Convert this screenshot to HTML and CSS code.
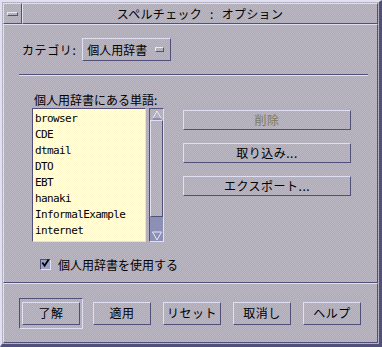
FILE: index.html
```html
<!DOCTYPE html>
<html lang="ja">
<head>
<meta charset="UTF-8" />
<title>スペルチェック : オプション</title>
<link rel="stylesheet" href="styles.css">
</head>
<body>

<div class="window">
  <div class="titlebar">
    <div class="menu-btn"><span class="menu-bar"></span></div>
    <div class="title">スペルチェック : オプション</div>
  </div>

  <div class="content">
    <div class="category">
      <span class="label">カテゴリ:</span>
      <div class="option-menu">
        <span>個人用辞書</span>
        <span class="option-mark"></span>
      </div>
    </div>

    <div class="separator"></div>

    <div class="words-title">個人用辞書にある単語:</div>
    <div class="words-row">
      <div class="list">
        <div class="item">browser</div>
        <div class="item">CDE</div>
        <div class="item">dtmail</div>
        <div class="item">DTO</div>
        <div class="item">EBT</div>
        <div class="item">hanaki</div>
        <div class="item">InformalExample</div>
        <div class="item">internet</div>
      </div>
      <div class="scrollbar">
        <div class="arrow up"><svg width="12" height="10" viewBox="0 0 12 10"><path d="M1.5 9 L6 1 L10.5 9 Z" fill="none" stroke="#e8e8f8" stroke-width="1"/><path d="M1.5 9 L10.5 9" stroke="#50507a"/></svg></div>
        <div class="slider"></div>
        <div class="trough"></div>
        <div class="arrow down"><svg width="12" height="10" viewBox="0 0 12 10"><path d="M1.5 1 L6 9 L10.5 1 Z" fill="none" stroke="#e8e8f8" stroke-width="1"/></svg></div>
      </div>
      <div class="side-buttons">
        <button class="btn disabled">削除</button>
        <button class="btn">取り込み...</button>
        <button class="btn">エクスポート...</button>
      </div>
    </div>

    <label class="check">
      <span class="check-box">
        <svg width="10" height="10" viewBox="0 0 10 10"><path d="M1.5 4.5 L4 8 L8.5 1" fill="none" stroke="#000" stroke-width="2"/></svg>
      </span>
      <span>個人用辞書を使用する</span>
    </label>
  </div>

  <div class="footer">
    <div class="default-frame"><button class="btn small">了解</button></div>
    <button class="btn small">適用</button>
    <button class="btn small">リセット</button>
    <button class="btn small">取消し</button>
    <button class="btn small">ヘルプ</button>
  </div>
</div>

</body>
</html>
```

FILE: styles.css
```css
body {
  margin: 0;
  padding: 0;
  font-family: "Noto Sans CJK JP", "DejaVu Sans", sans-serif;
  font-size: 12px;
  color: #000;
  background: #50507a;
}
.window {
  box-sizing: border-box;
  width: 382px;
  height: 347px;
  background: repeating-conic-gradient(#a0a8e0 0 25%, #bcb8c4 0 50%) 0 0/2px 2px;
  border-top: 2px solid #e0e0f4;
  border-left: 2px solid #e0e0f4;
  border-right: 3px solid #50507a;
  border-bottom: 3px solid #50507a;
  display: flex;
  flex-direction: column;
}
.titlebar {
  display: flex;
  height: 21px;
  margin: 1px 1px 0 1px;
}
.menu-btn {
  box-sizing: border-box;
  width: 19px;
  border-top: 1px solid #e0e0f4;
  border-left: 1px solid #e0e0f4;
  border-right: 1px solid #50507a;
  border-bottom: 1px solid #50507a;
  display: flex;
  align-items: center;
  justify-content: center;
}
.menu-bar {
  width: 9px;
  height: 2px;
  border-top: 1px solid #e8e8f8;
  border-left: 1px solid #e8e8f8;
  border-right: 1px solid #50507a;
  border-bottom: 1px solid #50507a;
}
.title {
  flex: 1;
  box-sizing: border-box;
  border-top: 1px solid #e0e0f4;
  border-left: 1px solid #e0e0f4;
  border-right: 1px solid #50507a;
  border-bottom: 1px solid #50507a;
  text-align: center;
  line-height: 19px;
  font-size: 12px;
  white-space: pre;
  letter-spacing: 0.3px;
  word-spacing: 5px;
}
.content {
  flex: 1;
  box-sizing: border-box;
  border-top: 1px solid #e0e0f4;
  border-left: 1px solid #e0e0f4;
  border-right: 1px solid #50507a;
  border-bottom: 1px solid #50507a;
  margin: 0 1px;
  padding: 13px 12px 0 18px;
}
.category {
  display: flex;
  align-items: center;
  gap: 6px;
}
.label {
  letter-spacing: 0.6px;
}
.option-menu {
  box-sizing: border-box;
  width: 89px;
  height: 23px;
  border-top: 1px solid #e0e0f4;
  border-left: 1px solid #e0e0f4;
  border-right: 1px solid #50507a;
  border-bottom: 1px solid #50507a;
  display: flex;
  align-items: center;
  padding-left: 4px;
  font-size: 12px;
}
.option-mark {
  width: 7px;
  height: 3px;
  margin-left: 8px;
  border-top: 1px solid #e8e8f8;
  border-left: 1px solid #e8e8f8;
  border-right: 1px solid #50507a;
  border-bottom: 1px solid #50507a;
}
.separator {
  height: 0;
  border-top: 1px solid #50507a;
  border-bottom: 1px solid #e0e0f4;
  margin: 13px -3px 0 -3px;
}
.words-title {
  margin: 17px 0 0 12px;
  line-height: 14px;
}
.words-row {
  display: flex;
  margin: 1px 0 0 10px;
}
.list {
  box-sizing: border-box;
  width: 114px;
  height: 134px;
  background: repeating-conic-gradient(#fffff4 0 25%, #fff8cc 0 50%) 0 0/2px 2px;
  border-top: 1px solid #50507a;
  border-left: 1px solid #50507a;
  border-right: 1px solid #e0e0f4;
  border-bottom: 1px solid #e0e0f4;
  padding: 2px 0 0 2px;
  font-family: "DejaVu Sans Mono", "Liberation Mono", monospace;
  font-size: 11px;
  letter-spacing: -0.6px;
  overflow: hidden;
}
.item {
  height: 16px;
  line-height: 16px;
}
.scrollbar {
  box-sizing: border-box;
  width: 15px;
  height: 134px;
  margin-left: 3px;
  border-top: 1px solid #50507a;
  border-left: 1px solid #50507a;
  border-right: 1px solid #e0e0f4;
  border-bottom: 1px solid #e0e0f4;
  display: flex;
  flex-direction: column;
}
.arrow {
  height: 11px;
  display: flex;
  justify-content: center;
  align-items: center;
}
.arrow.down {
  background: #8c90b4;
}
.slider {
  flex: 1;
  border-top: 1px solid #e0e0f4;
  border-left: 1px solid #e0e0f4;
  border-right: 1px solid #50507a;
  border-bottom: 1px solid #50507a;
}
.trough {
  height: 13px;
  background: #8c90b4;
}
.side-buttons {
  display: flex;
  flex-direction: column;
  gap: 13px;
  margin: 2px 0 0 19px;
}
.btn {
  box-sizing: border-box;
  width: 168px;
  height: 20px;
  background: transparent;
  border-top: 1px solid #e0e0f4;
  border-left: 1px solid #e0e0f4;
  border-right: 1px solid #50507a;
  border-bottom: 1px solid #50507a;
  border-radius: 0;
  padding: 0;
  font-family: "Noto Sans CJK JP", "DejaVu Sans", sans-serif;
  font-size: 12px;
  color: #000;
  line-height: 18px;
  letter-spacing: 0.5px;
}
.btn.disabled {
  color: #7c7860;
}
.check {
  display: flex;
  align-items: center;
  gap: 7px;
  margin: 14px 0 0 18px;
  font-size: 12px;
}
.check-box {
  box-sizing: border-box;
  width: 11px;
  height: 11px;
  border-top: 1px solid #50507a;
  border-left: 1px solid #50507a;
  border-right: 1px solid #e0e0f4;
  border-bottom: 1px solid #e0e0f4;
  background: #9ca0c8;
  display: flex;
  overflow: visible;
}
.check-box svg {
  margin: -2px 0 0 0;
}
.footer {
  box-sizing: border-box;
  height: 60px;
  margin: 0 1px 1px 1px;
  border-top: 1px solid #e0e0f4;
  border-left: 1px solid #e0e0f4;
  border-right: 1px solid #50507a;
  border-bottom: 1px solid #50507a;
  display: flex;
  align-items: center;
  gap: 12px;
  padding-left: 15px;
}
.btn.small {
  width: 58px;
  height: 23px;
}
.default-frame {
  box-sizing: border-box;
  width: 64px;
  height: 31px;
  border-top: 1px solid #50507a;
  border-left: 1px solid #50507a;
  border-right: 1px solid #e0e0f4;
  border-bottom: 1px solid #e0e0f4;
  display: flex;
  align-items: center;
  justify-content: center;
  margin-right: -2px;
}
```
